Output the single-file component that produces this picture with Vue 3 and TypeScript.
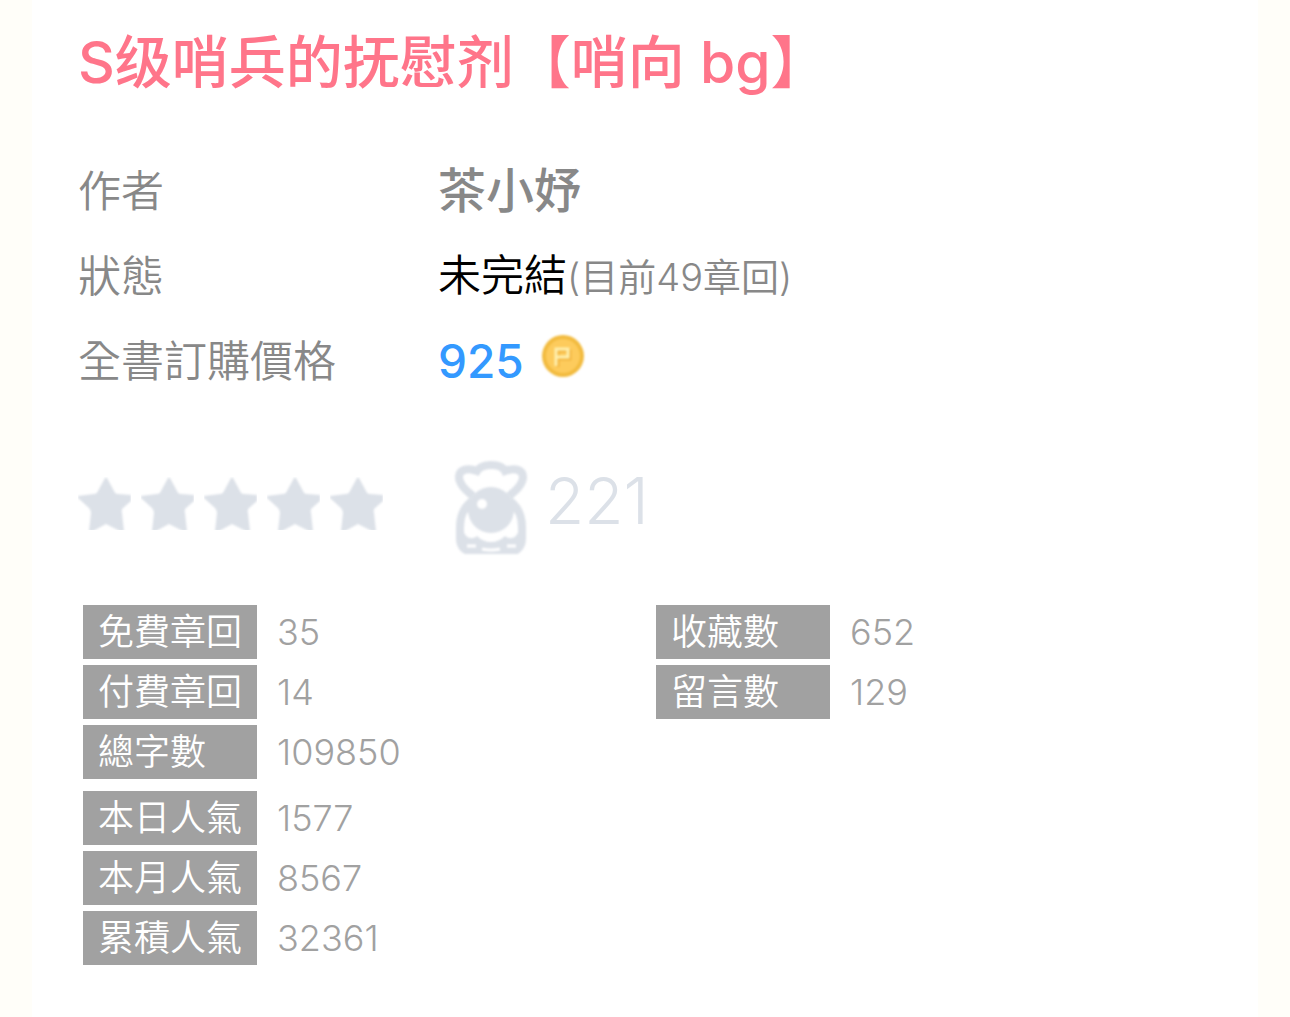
<script setup lang="ts">
interface Stat {
  label: string
  value: number
}

const stars = [1, 2, 3, 4, 5]

const chapterStats: Stat[] = [
  { label: '免費章回', value: 35 },
  { label: '付費章回', value: 14 },
  { label: '總字數', value: 109850 },
]

const popularityStats: Stat[] = [
  { label: '本日人氣', value: 1577 },
  { label: '本月人氣', value: 8567 },
  { label: '累積人氣', value: 32361 },
]

const readerStats: Stat[] = [
  { label: '收藏數', value: 652 },
  { label: '留言數', value: 129 },
]
</script>

<template>
  <main class="book">
    <h1 class="title">S级哨兵的抚慰剂【哨向 bg】</h1>

    <dl class="info">
      <dt>作者</dt>
      <dd class="author">茶小妤</dd>
      <dt>狀態</dt>
      <dd><span class="status">未完結</span><span class="progress">(目前49章回)</span></dd>
      <dt>全書訂購價格</dt>
      <dd class="price">
        <span>925</span>
        <svg class="coin" viewBox="0 0 42 42" role="img" aria-label="P">
          <circle cx="21" cy="21" r="21" fill="#f2bb3f" />
          <circle cx="21" cy="21" r="17" fill="#fdcb5c" />
          <path d="M16 32V16H28V24H17" fill="none" stroke="#f3b640" stroke-width="3" />
          <path d="M14 31V14H26V22H15" fill="none" stroke="#fff0ae" stroke-width="3" />
        </svg>
      </dd>
    </dl>

    <div class="rating">
      <div class="stars" role="img" aria-label="0 / 5">
        <svg v-for="star in stars" :key="star" viewBox="0 0 53 53">
          <path d="M27 1Q28 0 29 1L36 14Q37 17 40 17L53 18V24L45 31Q43 33 44 36L46 54H42L28 47L15 54H11L13 36Q13 33 11 31L0 21V19L16 17Q19 17 20 14Z" />
        </svg>
      </div>
      <div class="likes">
        <svg class="mascot" viewBox="0 0 72 94" aria-hidden="true">
          <path class="line" d="M18 36C10 30 4 24 4 17C4 10 12 7 22 11C27 3 46 3 50 11C60 7 68 10 68 17C68 24 62 30 54 36" />
          <path class="line" d="M17 41C8 48 5 57 5 67V78C5 86 9 91 17 92H56C63 91 67 86 67 78V67C67 57 64 48 55 41" />
          <circle cx="36" cy="50" r="23" />
          <path d="M5 70H8C11 79 17 80 22 76C26 80 31 82 36 82C41 82 46 80 50 76C55 80 61 79 64 70H67V86L59 94H13L5 86Z" />
          <path class="mark" d="M12 86H21M27 89Q36 91 45 89M52 86H61" />
          <circle class="glint" cx="27" cy="44" r="5" />
        </svg>
        <span>221</span>
      </div>
    </div>

    <div class="stats">
      <div class="column">
        <dl>
          <div v-for="stat in chapterStats" :key="stat.label" class="stat">
            <dt>{{ stat.label }}</dt>
            <dd>{{ stat.value }}</dd>
          </div>
        </dl>
        <dl>
          <div v-for="stat in popularityStats" :key="stat.label" class="stat">
            <dt>{{ stat.label }}</dt>
            <dd>{{ stat.value }}</dd>
          </div>
        </dl>
      </div>
      <div class="column">
        <dl>
          <div v-for="stat in readerStats" :key="stat.label" class="stat">
            <dt>{{ stat.label }}</dt>
            <dd>{{ stat.value }}</dd>
          </div>
        </dl>
      </div>
    </div>
  </main>
</template>

<style>
body {
  background: #fffef9;
}
</style>

<style scoped>
.book {
  box-sizing: border-box;
  min-height: 100vh;
  margin: 0 32px;
  padding: 20px 29px 52px 46px;
  background: #fff;
  color: #888;
  font-family: Inter, "Noto Sans CJK TC", sans-serif;
  font-weight: 350;
}

dl,
dd {
  margin: 0;
}

.title {
  margin: 0 0 42px;
  color: #ff758a;
  font-family: Inter, "Noto Sans CJK SC", sans-serif;
  font-size: 57px;
  font-weight: 500;
  line-height: 86px;
}

.info {
  display: grid;
  grid-template-columns: 360px 1fr;
  grid-auto-rows: 85px;
  align-items: center;
  font-size: 43px;
  line-height: 60px;
}

.author {
  font-size: 48px;
  font-weight: 500;
}

.status {
  color: #000;
}

.progress {
  font-size: 38px;
}

.price {
  display: flex;
  align-items: center;
  gap: 18px;
  color: #3399ff;
  font-size: 46px;
  font-weight: 500;
}

.coin {
  width: 42px;
  height: 42px;
  margin-bottom: 10px;
  filter: blur(1px);
}

.rating {
  display: grid;
  grid-template-columns: 377px 1fr;
  align-items: center;
  margin-top: 57px;
  color: #dce1e8;
}

.stars {
  display: flex;
  gap: 10px;
  margin-bottom: 8px;
}

.stars svg {
  width: 53px;
  height: 53px;
  fill: currentColor;
}

.stars path,
.mascot {
  filter: blur(1px);
}

.likes {
  display: flex;
  align-items: center;
  gap: 18px;
  font-size: 64px;
  font-weight: 300;
  line-height: 80px;
}

.likes span {
  margin-bottom: 12px;
}

.mascot {
  width: 72px;
  height: 94px;
  fill: currentColor;
}

.line {
  fill: none;
  stroke: currentColor;
  stroke-width: 8px;
}

.mark {
  fill: none;
  stroke: #fff;
  stroke-width: 3px;
}

.glint {
  fill: #fff;
}

.stats {
  display: grid;
  grid-template-columns: 1fr 1fr;
  margin: 51px 0 0 5px;
  color: #a1a1a1;
  font-size: 36px;
  line-height: 54px;
}

.column {
  display: flex;
  flex-direction: column;
  gap: 12px;
}

.column dl {
  display: flex;
  flex-direction: column;
  gap: 6px;
}

.stat {
  display: flex;
  gap: 20px;
}

.stat dt {
  box-sizing: border-box;
  width: 174px;
  padding-left: 15px;
  background: #a1a1a1;
  color: #fff;
}
</style>
